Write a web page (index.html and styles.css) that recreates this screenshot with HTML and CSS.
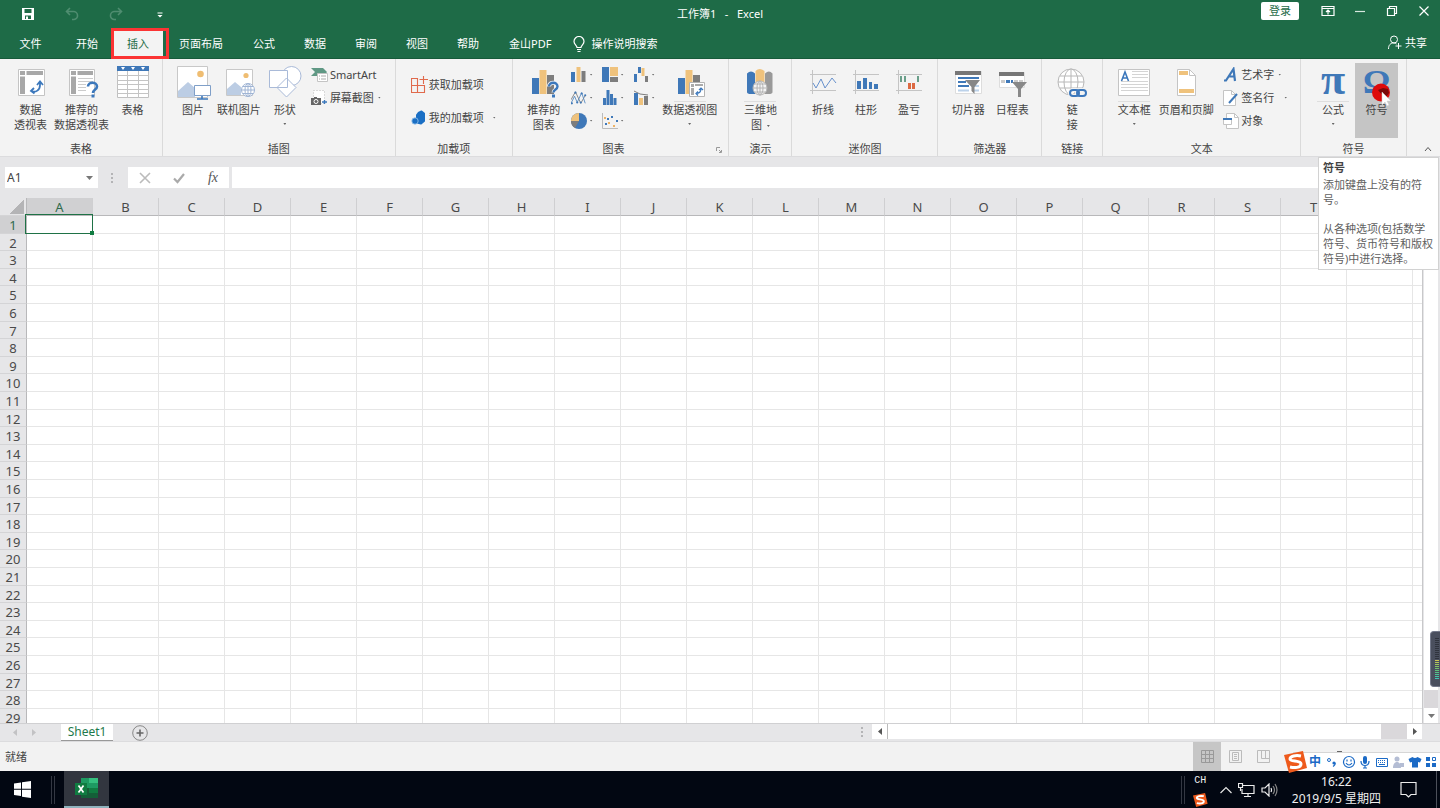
FILE: index.html
```html
<!DOCTYPE html>
<html lang="zh-CN">
<head>
<meta charset="utf-8">
<title>工作簿1 - Excel</title>
<link rel="stylesheet" href="styles.css">
</head>
<body>
<header class="titlebar">
  <div class="quick">
    <button aria-label="保存"><svg width="14" height="14" viewBox="0 0 14 14"><path d="M1 1h12v12H1z" fill="#fff"/><path d="M3.500 2h7v4h-7zM4 8.500h6V12H4z" fill="#1e6b47"/><path d="M5 9.500h2V12H5z" fill="#fff"/></svg></button>
    <button aria-label="撤消"><svg width="14" height="14" viewBox="0 0 14 14" fill="none" stroke="#4f8d70" stroke-width="1.600"><path d="M5 1L1.500 4.500 5 8M2 4.500h6a4 4 0 0 1 1 8H7"/></svg></button>
    <button aria-label="恢复"><svg width="14" height="14" viewBox="0 0 14 14" fill="none" stroke="#4f8d70" stroke-width="1.600"><path d="M9 1l3.500 3.500L9 8M12 4.500H6a4 4 0 0 0-1 8h2"/></svg></button>
    <button aria-label="自定义快速访问工具栏"><svg width="14" height="14" viewBox="0 0 14 14"><path d="M4.500 5.500h5v1h-5zM4.500 8h5L7 10.500z" fill="#fff"/></svg></button>
  </div>
  <h1 class="doc-title">工作簿1&nbsp; &nbsp;-&nbsp; &nbsp;Excel</h1>
  <div class="window-tools">
    <button class="login">登录</button>
    <button aria-label="功能区显示选项"><svg width="14" height="12" viewBox="0 0 14 12"><path d="M1 1.500h12v9H1zM1 3.500h12M7 9.500V5M5 7l2-2 2 2" fill="none" stroke="#fff" stroke-width="1.200"/></svg></button>
    <button aria-label="最小化"><svg width="14" height="12" viewBox="0 0 14 12"><path d="M2 6.500h10" stroke="#d8e8df" stroke-width="1.200"/></svg></button>
    <button aria-label="还原"><svg width="14" height="12" viewBox="0 0 14 12"><path d="M2.500 3.500h7v7h-7zM4.500 3V1.500h7v7H10" fill="none" stroke="#fff" stroke-width="1.200"/></svg></button>
    <button aria-label="关闭"><svg width="14" height="12" viewBox="0 0 14 12"><path d="M2.500 1.500l9 9M11.500 1.500l-9 9" stroke="#fff" stroke-width="1.200"/></svg></button>
  </div>
</header>

<nav class="tabs">
  <button class="tab tab-file">文件</button>
  <button class="tab">开始</button>
  <button class="tab tab-active">插入</button>
  <button class="tab tab-wide">页面布局</button>
  <button class="tab">公式</button>
  <button class="tab">数据</button>
  <button class="tab">审阅</button>
  <button class="tab">视图</button>
  <button class="tab">帮助</button>
  <button class="tab tab-wide">金山PDF</button>
  <button class="tell-me"><svg width="12" height="17" viewBox="0 0 12 17" fill="none" stroke="#fff" stroke-width="1.200"><path d="M4 11.500c0-2-3-3-3-6a5 5 0 0 1 10 0c0 3-3 4-3 6zM4 13.500h4M4.500 15.500h3"/></svg>操作说明搜索</button>
  <button class="share"><svg width="14" height="15" viewBox="0 0 14 15" fill="none" stroke="#fff"><circle cx="6" cy="4.500" r="3.500"/><path d="M.5 14c0-4 2-6 5-6 1.500 0 2.500.5 3 1M10.500 8v6M7.500 11h6"/></svg>共享</button>
</nav>

<main class="ribbon">
  <section class="group">
    <div class="items pad-5">
      <button class="big w-51"><svg class="ico" viewBox="0 0 32 32"><path d="M3.500 3.500h26v26h-26z" fill="#fff" stroke="#c4c4c4"/><path d="M5 5h5v4H5zM11.500 5H28v4H11.500zM5 10.500h5V28H5z" fill="#a8a8a8"/><path d="M16 25c5 2 9-1 9-6v-2M22 19l3-3.500 3 3.500M19 22l-3 3 3.500 2.500" fill="none" stroke="#3c78bc" stroke-width="1.800"/></svg><span>数据<br>透视表</span></button>
      <button class="big w-51"><svg class="ico" viewBox="0 0 32 32"><path d="M3.500 3.500h25v26h-25z" fill="#fff" stroke="#c4c4c4"/><path d="M5 5h5v4H5zM11.500 5H27v4H11.500zM5 10.500h5V28H5z" fill="#a8a8a8"/><path d="M12 12.500h15M12 15.500h15M12 18.500h8M12 21.500h8M12 24.500h8" stroke="#ccc"/><path d="M22 20.500c0-5 9-5 9 0 0 3-4 3-4 6.500" fill="none" stroke="#3c78bc" stroke-width="2.600"/><path d="M25.500 28.500h3v3h-3z" fill="#3c78bc"/></svg><span>推荐的<br>数据透视表</span></button>
      <button class="big w-51"><svg class="ico" viewBox="0 0 32 32"><path d="M.5 4.500h31v27H.5z" fill="#fff" stroke="#c0c0c0"/><path d="M0 0h32v5H0z" fill="#3f78b8"/><path d="M4 1h4L6 4zM14 1h4l-2 3zM24 1h4l-2 3z" fill="#fff"/><path d="M0 9.500h32M0 14.500h32M0 18.500h32M0 23.500h32M0 27.500h32M10.500 5v27M21.500 5v27" stroke="#c4c4c4"/></svg><span>表格</span></button>
    </div>
    <h2 class="caption">表格</h2>
  </section>

  <section class="group">
    <div class="items pad-7">
      <button class="big w-46"><svg class="ico wide" viewBox="0 0 36 34"><path d="M2.500 .5h30v31h-30z" fill="#fff" stroke="#c8c8c8"/><circle cx="25.500" cy="8" r="3.300" fill="#efbd72"/><path d="M3 29V25l10-9 7 6v9H3z" fill="#bccde4"/><path d="M19.500 19.500h16v10h-16z" fill="#fff" stroke="#7f9fc8"/><path d="M27 30v3M22 33h11" stroke="#3c78bc" stroke-width="1.600"/></svg><span>图片</span></button>
      <button class="big w-46"><svg class="ico" viewBox="0 0 32 32"><path d="M3.500 3.500h26v26h-26z" fill="#fff" stroke="#c8c8c8"/><circle cx="23" cy="9.500" r="2.600" fill="#efbd72"/><path d="M4 29V23l8-7 6 5v8z" fill="#bccde4"/><g fill="#fff" stroke="#9fb4d4"><circle cx="25" cy="24" r="6.500"/><ellipse cx="25" cy="24" rx="3" ry="6.500"/><path d="M18.500 24h13M25 17.500v13M20 20.500h10M20 27.500h10"/></g></svg><span>联机图片</span></button>
      <button class="big w-46"><svg class="ico" viewBox="0 0 32 32" fill="#fff" stroke="#a9bad8"><circle cx="22.500" cy="10" r="9.500"/><path d="M.5 4.500h18v17H.5zM17.500 12l9.500 9.500L17.500 31 8 21.500z"/></svg><span>形状</span><i class="caret"></i></button>
      <div class="stack">
        <button class="small"><svg width="17" height="16" viewBox="0 0 17 16"><path d="M0 1h12l4 4-3 4H0l4-4z" fill="#5f9884"/><path d="M6.500 6.500h10v8h-10z" fill="#fff" stroke="#c4c4c4"/><path d="M8 9h1M10 9h5M8 12h1M10 12h5" stroke="#aaa"/></svg><span>SmartArt</span></button>
        <button class="small"><svg width="17" height="16" viewBox="0 0 17 16"><path d="M2.500 .5h11v13h-11z" fill="#fff" stroke="#bbb" stroke-dasharray="1 2"/><path d="M0 8h3V7h3v1h4v7H0z" fill="#666"/><circle cx="5" cy="11.500" r="2" fill="none" stroke="#fff"/><path d="M11 12h5M13.500 10v4" stroke="#3c78bc" stroke-width="1.400"/></svg>屏幕截图<i class="caret"></i></button>
      </div>
    </div>
    <h2 class="caption">插图</h2>
  </section>

  <section class="group">
    <div class="items addins">
      <button class="small"><svg width="17" height="18" viewBox="0 0 17 18" fill="none" stroke="#e06a4c" stroke-width="1.100"><path d="M.5 2.500h6v7h-6zM.5 9.500h6v7h-6zM6.500 9.500h7v7h-7zM12.500 0v8M8.500 3.500H17"/></svg>获取加载项</button>
      <button class="small"><svg width="17" height="18" viewBox="0 0 17 18"><path d="M7.500 4l3-1.500 2.500 2v7.500l-3 2.500-4-1V6z" fill="#1b6fc4" stroke="#1b6fc4" stroke-width="2" stroke-linejoin="round"/><circle cx="4" cy="12" r="3.200" fill="#1b6fc4" stroke="#9cc6ee" stroke-width=".8"/></svg>我的加载项<i class="caret far"></i></button>
    </div>
    <h2 class="caption">加载项</h2>
  </section>

  <section class="group">
    <div class="items charts">
      <button class="big w-50"><svg class="ico" viewBox="0 0 32 32"><path d="M4 12h7v16H4z" fill="#3f78b8"/><path d="M11.500 4h7v24h-7z" fill="#efc27c"/><path d="M19 9h7v19h-7z" fill="#7d7d7d"/><path d="M21 20.500c0-5 8.500-5 8.500 0 0 3-4 3-4 6" fill="none" stroke="#f3f3f3" stroke-width="4"/><path d="M21 20.500c0-5 8.500-5 8.500 0 0 3-4 3-4 6" fill="none" stroke="#3c78bc" stroke-width="2.400"/><path d="M24 28.500h3v3h-3z" fill="#3c78bc"/></svg><span>推荐的<br>图表</span></button>
      <div class="mini-grid">
        <button aria-label="柱形图"><svg width="16" height="16" viewBox="0 0 16 16"><path d="M0 5h4v10H0z" fill="#3f78b8"/><path d="M5.500 0h4v15h-4z" fill="#efc27c"/><path d="M10.500 4h4v11h-4z" fill="#7d7d7d"/></svg><i class="caret"></i></button>
        <button aria-label="层次结构图"><svg width="16" height="16" viewBox="0 0 16 16"><path d="M0 0h7v15H0z" fill="#3f78b8"/><path d="M8 0h8v9H8z" fill="#efc27c"/><path d="M8 10h8v5H8z" fill="#7d7d7d"/></svg><i class="caret"></i></button>
        <button aria-label="瀑布图"><svg width="16" height="16" viewBox="0 0 16 16"><path d="M1 7h3v8H1zM5 0h3v6H5z" fill="#3f78b8"/><path d="M8.500 1h3v8h-3z" fill="#efc27c"/><path d="M12 9h3v6h-3z" fill="#7d7d7d"/></svg><i class="caret"></i></button>
        <button aria-label="折线图"><svg width="16" height="16" viewBox="0 0 18 16" fill="none"><path d="M0 10l5-9 6 13 5-9" stroke="#7d7d7d"/><path d="M0 14l4-8 3 7 5-11 4 12" stroke="#5588c0"/><g fill="#3f78b8"><circle cx="1" cy="14" r="1.200"/><circle cx="7" cy="13" r="1.200"/><circle cx="12" cy="3" r="1.200"/><circle cx="16" cy="5" r="1.200"/><circle cx="5" cy="2" r="1.200"/><circle cx="11" cy="13" r="1.200"/></g></svg><i class="caret"></i></button>
        <button aria-label="统计图"><svg width="16" height="16" viewBox="0 0 16 16"><path d="M1 8h3v7H1zM4.500 0h3v15h-3zM8 4h3v11H8zM11.500 8h3v7h-3z" fill="#3f78b8"/></svg><i class="caret"></i></button>
        <button aria-label="组合图"><svg width="16" height="16" viewBox="0 0 16 16"><path d="M1 3h4v12H1z" fill="#3f78b8"/><path d="M6 8h4v7H6z" fill="#efc27c"/><path d="M11 6h4v9h-4z" fill="#7d7d7d"/><path d="M1 1l6 3 8 1" fill="none" stroke="#7d7d7d"/></svg><i class="caret"></i></button>
        <button aria-label="饼图"><svg width="16" height="16" viewBox="0 0 16 16"><circle cx="8" cy="8" r="8" fill="#3f78b8"/><path d="M8 8V0a8 8 0 0 0-8 8z" fill="#efc27c"/><path d="M8 8H0a8 8 0 0 0 4 7z" fill="#7d7d7d"/></svg><i class="caret"></i></button>
        <button aria-label="散点图"><svg width="16" height="16" viewBox="0 0 16 16"><path d="M.5 0v15.500H16" fill="none" stroke="#bbb"/><path d="M5 5h2v2H5zM9 3h2v2H9zM3 10h2v2H3zM14 7h2v2h-2z" fill="#3f78b8"/><path d="M2 4h2v2H2zM6 9h2v2H6zM11 12h2v2h-2z" fill="#efb366"/></svg><i class="caret"></i></button>
      </div>
      <button class="big w-62"><svg class="ico ruled" viewBox="0 0 32 32"><path d="M4 12h7v16H4z" fill="#3f78b8"/><path d="M11.500 4h7v24h-7z" fill="#efc27c"/><path d="M19 9h7v19h-7z" fill="#7d7d7d"/><path d="M15.500 16.500h15v14h-15z" fill="#fff" stroke="#b4b4b4"/><path d="M17 18h3v3h-3zM21 18h8v2h-8zM17 22h3v7h-3z" fill="#aaa"/><path d="M22 27.500c3 0 5-2 5-5M25 24l2-2 2 2M24 25.500l-2 2 2 2" fill="none" stroke="#3c78bc" stroke-width="1.200"/></svg><span>数据透视图</span><i class="caret"></i></button>
      <button class="launcher" aria-label="查看所有图表"><svg width="6" height="6" viewBox="0 0 6 6"><path d="M.5 4V.5H4M3 3l2 2M5.500 3v2.500H3" fill="none" stroke="#999"/></svg></button>
    </div>
    <h2 class="caption caption-charts">图表</h2>
  </section>

  <section class="group">
    <div class="items middle">
      <button class="big w-50"><svg class="ico ruled" viewBox="0 0 32 32"><path d="M3 7.500q4-4 8 0V28H7q-4 0-4-2z" fill="#3f78b8"/><path d="M11.500 5q4-4 9 0v23h-9z" fill="#efc27c"/><path d="M21 7.500q4-4 7.500 0V26q0 2-4 2H21z" fill="#999"/><g fill="#f3f3f3" stroke="#b4b4b4"><circle cx="16" cy="22" r="7"/><ellipse cx="16" cy="22" rx="3" ry="7"/><path d="M9 22h14M16 15v14M10.500 18h11M10.500 26h11"/></g></svg><span>三维地<br>图 <i class="caret inline"></i></span></button>
    </div>
    <h2 class="caption">演示</h2>
  </section>

  <section class="group">
    <div class="items pad-9">
      <button class="big w-43"><svg class="ico" viewBox="0 0 32 32" fill="none"><path d="M5.500 4v24M3 8.500h26M3 24.500h26" stroke="#c4c4c4"/><path d="M6 17l3 5 5-9 4 9 7-10 4 5" stroke="#6690cc"/></svg><span>折线</span></button>
      <button class="big w-43"><svg class="ico" viewBox="0 0 32 32" fill="none"><path d="M5.500 4v24M3 8.500h26M3 24.500h26" stroke="#c4c4c4"/><path d="M7 15h4v8H7zM13 12h4v11h-4zM19 16h3v7h-3zM24 18h4v5h-4z" fill="#3f78b8"/></svg><span>柱形</span></button>
      <button class="big w-43"><svg class="ico" viewBox="0 0 32 32" fill="none"><path d="M5.500 4v24M3 8.500h26M3 24.500h26" stroke="#c4c4c4"/><path d="M7 10h2v6H7zM11 10h2v6h-2zM24 10h2v6h-2z" fill="#6a9f8a"/><path d="M15 17h3v6h-3zM19 17h3v6h-3z" fill="#dc6a42"/></svg><span>盈亏</span></button>
    </div>
    <h2 class="caption">迷你图</h2>
  </section>

  <section class="group">
    <div class="items pad-8">
      <button class="big w-44"><svg class="ico" viewBox="0 0 32 32"><path d="M3.500 5.500h26v22h-26z" fill="#fff" stroke="#ddd"/><path d="M3 5h26v4H3z" fill="#777"/><path d="M6 12h21M6 16h8M6 20h11" stroke="#3f78b8" stroke-width="2"/><path d="M6 24.500h11M21 20h6M21 24.500h6" stroke="#bcd2ea" stroke-width="2"/><path d="M13 14h15l-5.500 7v7l-3-3v-4z" fill="#888"/></svg><span>切片器</span></button>
      <button class="big w-44"><svg class="ico" viewBox="0 0 32 32"><path d="M3.500 6.500h25v15h-25z" fill="#fff" stroke="#ddd"/><path d="M3 6h25v4H3z" fill="#777"/><path d="M5 14h4v3H5zM18 14h4v3h-4zM23 14h4v3h-4z" fill="#ccc"/><path d="M10 14h4v3h-4zM15 14h2v3h-2z" fill="#3f78b8"/><path d="M16 16h15l-6 7v8h-3v-8z" fill="#888"/></svg><span>日程表</span></button>
    </div>
    <h2 class="caption">筛选器</h2>
  </section>

  <section class="group">
    <div class="items middle">
      <button class="big w-50"><svg class="ico" viewBox="0 0 32 32" fill="none"><g fill="#fff" stroke="#b8b8b8"><circle cx="15" cy="16" r="13"/><ellipse cx="15" cy="16" rx="7" ry="13"/><path d="M2 16h26M15 3v26M4 10h22M4 22h22" fill="none"/></g><g stroke="#f3f3f3" stroke-width="4"><rect x="14" y="24" width="9" height="6" rx="3"/><rect x="21" y="24" width="9" height="6" rx="3"/></g><g stroke="#3c78bc" stroke-width="2"><rect x="14" y="24" width="9" height="6" rx="3"/><rect x="21" y="24" width="9" height="6" rx="3"/></g></svg><span>链<br>接</span></button>
    </div>
    <h2 class="caption">链接</h2>
  </section>

  <section class="group">
    <div class="items pad-6">
      <button class="big w-50"><svg class="ico ruled" viewBox="0 0 32 32"><path d="M.5 3.500h31v26H.5z" fill="#fff" stroke="#c4c4c4"/><path d="M14 5.500h16M14 8.500h16M14 11.500h16M3 15.500h27M3 18.500h27M3 21.500h27M3 24.500h27" stroke="#d4d4d4"/><path d="M3.500 15L7 6l3.500 9M4.500 12h5" fill="none" stroke="#3c78bc" stroke-width="1.600"/></svg><span>文本框</span><i class="caret"></i></button>
      <button class="big w-54"><svg class="ico" viewBox="0 0 32 32"><path d="M7.500 3.500h12l6 6v20h-18z" fill="#fff" stroke="#c4c4c4"/><path d="M19.500 3.500v6h6" fill="none" stroke="#c4c4c4"/><path d="M9 5h9v4H9zM9 23h15v4H9z" fill="#efc27c"/></svg><span>页眉和页脚</span></button>
      <div class="stack stack-text">
        <button class="small"><svg width="16" height="16" viewBox="0 0 16 16"><path d="M1 13.500h2L10.500 2 12 14M5 9.500h6.500" fill="none" stroke="#3f78b8" stroke-width="2.200"/></svg>艺术字<i class="caret"></i></button>
        <button class="small"><svg width="16" height="16" viewBox="0 0 16 16"><path d="M.5 .5h8l4 4v11H.5z" fill="#fff" stroke="#c4c4c4"/><path d="M8.500 .5v4h4" fill="none" stroke="#c4c4c4"/><path d="M6 13l8-9" stroke="#3f78b8" stroke-width="2"/></svg>签名行<i class="caret far"></i></button>
        <button class="small"><svg width="16" height="16" viewBox="0 0 16 16"><path d="M3.500 .5h8l4 4v11h-12z" fill="#fff" stroke="#c4c4c4"/><path d="M11.500 .5v4h4" fill="none" stroke="#c4c4c4"/><path d="M.5 5.500h8v6h-8z" fill="#fff" stroke="#c4c4c4"/><path d="M0 5h9v2H0z" fill="#3f78b8"/></svg>对象</button>
      </div>
    </div>
    <h2 class="caption">文本</h2>
  </section>

  <section class="group">
    <div class="items pad-10">
      <button class="big w-44"><b class="ico ruled glyph pi">π</b><span>公式</span><i class="caret"></i></button>
      <button class="big w-43 pressed"><b class="ico glyph omega">Ω</b><span>符号</span>
        <svg class="pointer" width="26" height="24" viewBox="0 0 26 24"><circle cx="10" cy="9.500" r="9" fill="#dd0b0b"/><path d="M9 9.500L7 7l5-2 5 1 1 4-3 4z" fill="#7c0a0a"/><path d="M11 9v13l3-3 2 4 2-1-2-4h4z" fill="#fff" stroke="#ccc" stroke-width=".5"/></svg>
      </button>
    </div>
    <h2 class="caption">符号</h2>
  </section>
  <div class="ribbon-end"><button aria-label="折叠功能区"><svg width="8" height="6" viewBox="0 0 8 6"><path d="M1 5l3-3.500L7 5" fill="none" stroke="#555"/></svg></button></div>
</main>

<div class="formula-bar">
  <div class="name-box"><input aria-label="名称框" value="A1"><button aria-label="名称列表"><svg width="7" height="4" viewBox="0 0 7 4"><path d="M0 0h7L3.500 4z" fill="#777"/></svg></button></div>
  <i class="dots"></i>
  <div class="fx-box">
    <button aria-label="取消"><svg width="12" height="12" viewBox="0 0 12 12"><path d="M1 1l10 10M11 1L1 11" stroke="#bbb" stroke-width="1.600"/></svg></button>
    <button aria-label="输入"><svg width="12" height="12" viewBox="0 0 12 12"><path d="M1 6.500L4.500 10 11 2" fill="none" stroke="#aaa" stroke-width="2.200"/></svg></button>
    <button class="fx" aria-label="插入函数">fx</button>
  </div>
  <input class="formula" aria-label="编辑栏">
</div>

<div class="sheet">
  <div class="grid-clip"><table class="cells" id="cells"></table></div>
  <div class="vscroll"><div class="vthumb"></div><div class="vtrack"></div><button aria-label="向下滚动"><svg width="7" height="4" viewBox="0 0 7 4"><path d="M0 0h7L3.500 4z" fill="#777"/></svg></button></div>
</div>

<div class="sheet-tabs">
  <div class="sheet-nav"><button aria-label="上一个"><svg width="5" height="8" viewBox="0 0 5 8"><path d="M4 0v7L0 3.500z" fill="#c2c2c4"/></svg></button><button aria-label="下一个"><svg width="5" height="8" viewBox="0 0 5 8"><path d="M1 0v7l4-3.500z" fill="#c2c2c4"/></svg></button></div>
  <button class="sheet-tab">Sheet1</button>
  <button class="add-sheet" aria-label="新工作表"><svg width="16" height="16" viewBox="0 0 16 16" fill="none" stroke="#888"><circle cx="8" cy="8" r="7.300"/><path d="M8 4.500v7M4.500 8h7" stroke="#666" stroke-width="1.600"/></svg></button>
  <i class="dots tabs-dots"></i>
  <div class="hscroll">
    <button aria-label="向左滚动"><svg width="4" height="7" viewBox="0 0 4 7"><path d="M4 0v7L0 3.500z" fill="#555"/></svg></button>
    <div class="hthumb"></div><div class="htrack"></div>
    <button aria-label="向右滚动"><svg width="4" height="7" viewBox="0 0 4 7"><path d="M0 0v7l4-3.500z" fill="#555"/></svg></button>
  </div>
</div>

<footer class="status">
  <span class="ready">就绪</span>
  <button class="view view-on" aria-label="普通"><svg width="13" height="13" viewBox="0 0 13 13"><path d="M.5 .5h12v12H.5zM.5 4.500h12M.5 8.500h12M4.500 .5v12M8.500 .5v12" fill="none" stroke="#999"/></svg></button>
  <button class="view" aria-label="页面布局"><svg width="13" height="13" viewBox="0 0 13 13"><path d="M.5 .5h12v12H.5zM3.500 2.500h6v8h-6zM5 4.500h3M5 6.500h3M5 8.500h3" fill="none" stroke="#bbb"/></svg></button>
  <button class="view" aria-label="分页预览"><svg width="13" height="13" viewBox="0 0 13 13"><path d="M.5 .5h12v12H.5zM4.500 .5v8h8M8.500 .5v8" fill="none" stroke="#bbb"/></svg></button>
  <input class="zoom" type="range" aria-label="缩放" value="50">
  <span class="percent">100%</span>
</footer>

<footer class="taskbar">
  <button class="start" aria-label="开始"><svg width="17" height="17" viewBox="0 0 17 17"><path d="M0 2.500L7 1.500v6.300H0zM8 1.300L17 0v7.800H8zM0 8.800h7v6.300L0 14zM8 8.800h9V17l-9-1.300z" fill="#fff"/></svg></button>
  <i class="bars"></i>
  <button class="app" aria-label="Excel"><svg width="23" height="21" viewBox="0 0 23 21"><path d="M6 0h17v20H6z" fill="#1e9a62"/><path d="M14 0h9v5h-9z" fill="#35c07f"/><path d="M6 10h8v10H6z" fill="#185c37"/><path d="M14 10h9v5h-9z" fill="#107c41"/><path d="M6 15h17v5H6z" fill="#145f38"/><path d="M0 5h12v12H0z" fill="#107c41"/><path d="M3.500 7.500l5 7M8.500 7.500l-5 7" stroke="#fff" stroke-width="1.700"/></svg></button>
  <div class="tray">
    <i class="bars"></i>
    <div class="lang"><span>CH</span><svg width="16" height="14" viewBox="0 0 24 22"><path d="M1 4l19-4 4 17-18 5z" fill="#ee5a1c"/><path d="M18 5c-5-1-11 0-11 3s11 1 11 5-7 4-11 3" fill="none" stroke="#fff" stroke-width="3"/></svg></div>
    <svg width="12" height="8" viewBox="0 0 12 8"><path d="M.5 7L6 1.500 11.500 7" fill="none" stroke="#e4e4e4" stroke-width="1.200"/></svg>
    <svg width="17" height="14" viewBox="0 0 17 14" fill="none" stroke="#ececec" stroke-width="1.200"><path d="M5 2.500h11v8H4V6M10 10.500v3M6 13.500h7"/><path d="M.5 .5h4v4h-4zM2.500 5v3"/></svg>
    <svg width="17" height="14" viewBox="0 0 17 14" fill="none" stroke="#ececec" stroke-width="1.200"><path d="M1 5h3l4-4v12L4 9H1zM10 5q1 2 0 4"/><path d="M12 3q3 4 0 8M14 1q4 6 0 12" stroke="#888"/></svg>
    <div class="clock"><span>16:22</span><span>2019/9/5 星期四</span></div>
    <svg width="17" height="17" viewBox="0 0 17 17"><path d="M1 1.500h15v12h-5L8.500 16 6 13.500H1z" fill="none" stroke="#ececec" stroke-width="1.200"/></svg>
    <i class="edge"></i>
  </div>
</footer>

<div class="tooltip" role="tooltip"><strong>符号</strong><p>添加键盘上没有的符<br>号。</p><p>从各种选项(包括数学<br>符号、货币符号和版权<br>符号)中进行选择。</p></div>

<div class="ime">
  <svg class="ime-logo" width="24" height="22" viewBox="0 0 24 22"><path d="M1 4l19-4 4 17-18 5z" fill="#ee5a1c"/><path d="M18 5c-5-1-11 0-11 3s11 1 11 5-7 4-11 3" fill="none" stroke="#fff" stroke-width="3"/></svg>
  <b>中</b>
  <svg width="14" height="14" viewBox="0 0 14 14"><circle cx="4" cy="5" r="1.500" fill="none" stroke="#1b6ac6"/><circle cx="9" cy="8" r="1.600" fill="#1b6ac6"/><path d="M10 8q.5 2-2 3.500" fill="none" stroke="#1b6ac6" stroke-width="1.300"/></svg>
  <svg width="14" height="14" viewBox="0 0 14 14" fill="none" stroke="#1b6ac6" stroke-width="1.200"><circle cx="7" cy="7" r="5.500"/><path d="M4 8q3 4 6 0M5 4.500v2M9 4.500v2"/></svg>
  <svg width="14" height="14" viewBox="0 0 14 14"><rect x="5" y="1" width="4" height="8" rx="2" fill="#1b6ac6"/><path d="M3 6c0 6 8 6 8 0M7 10v3M5 13h4" fill="none" stroke="#1b6ac6" stroke-width="1.200"/></svg>
  <svg width="14" height="14" viewBox="0 0 14 14"><path d="M1.500 3.500h11v8h-11z" fill="#fff" stroke="#1b6ac6"/><path d="M3 5.500h8M3 7.500h8" stroke="#1b6ac6" stroke-dasharray="1 1"/><path d="M4 9.500h6" stroke="#1b6ac6"/></svg>
  <svg width="14" height="14" viewBox="0 0 14 14" fill="#b4bdd4"><circle cx="6" cy="4" r="2.500"/><path d="M2 13c0-8 8-8 8 0zM9 8h4v4H9z"/></svg>
  <svg width="14" height="14" viewBox="0 0 14 14"><path d="M4.500 2q2.500 2 5 0L13.500 4l-1.500 3.500-2-.5V12.500H4V7l-2 .5L.5 4z" fill="#1b6ac6"/></svg>
  <svg width="14" height="14" viewBox="0 0 14 14"><path d="M2 2h4v4H2zM2 8h4v4H2zM8 8h4v4H8z" fill="#1b6ac6"/><path d="M8.500 2.500h3v3h-3z" fill="none" stroke="#1b6ac6"/></svg>
</div>
<div class="meter" aria-hidden="true"><i></i></div>
<script src="grid.js"></script>
</body>
</html>
```

FILE: styles.css
```css
* { box-sizing: border-box; }
body {
  margin: 0;
  height: 100vh;
  display: flex;
  flex-direction: column;
  position: relative;
  overflow: hidden;
  font: 11px/14px "Noto Sans", "Noto Sans CJK SC", sans-serif;
  color: #444;
  background: #e6e6e8;
}
button, input {
  font: inherit;
  color: inherit;
  border: 0;
  padding: 0;
  margin: 0;
  background: none;
  border-radius: 0;
}
button { white-space: nowrap; }
svg { display: block; flex: none; }
h1, h2, p { margin: 0; font: inherit; }

.titlebar {
  flex: none;
  height: 28px;
  display: grid;
  grid-template-columns: 1fr auto 1fr;
  background: #1e6b47;
  color: #fff;
}
.quick { display: flex; align-items: center; gap: 30px; padding-left: 21px; }
.doc-title { line-height: 27px; }
.window-tools {
  display: flex;
  justify-content: flex-end;
  align-items: center;
  gap: 18px;
  padding: 0 9px 6px 0;
}
.login {
  width: 38px;
  height: 18px;
  margin-right: 4px;
  background: #fff;
  color: #1e6b47;
  border-radius: 2px;
}

.tabs {
  flex: none;
  height: 31px;
  display: flex;
  align-items: center;
  gap: 1px;
  padding-top: 2px;
  background: #1e6b47;
  border-bottom: 1px solid #175a3a;
  color: #fff;
}
.tab { height: 26px; padding: 0 14px; }
.tab-file { width: 61px; }
.tab-wide { padding: 0 15px; }
.tab-active { position: relative; background: #f3f3f3; color: #1e6b47; }
.tab-active::after {
  content: "";
  position: absolute;
  inset: -3px -6px -2px -2px;
  border: 3px solid #fb3434;
}
.tell-me { display: flex; align-items: center; gap: 6px; margin-left: 6px; }
.share { display: flex; align-items: center; gap: 3px; margin: 0 13px 3px auto; }

.ribbon {
  flex: none;
  height: 98px;
  display: grid;
  grid-template-columns: 163fr 233fr 117fr 217fr 63fr 146fr 104fr 61fr 198fr 106fr 33fr;
  background: #f3f3f3;
  border-bottom: 1px solid #dcdcde;
}
.group {
  min-width: 0;
  display: flex;
  flex-direction: column;
  border-right: 1px solid #dadada;
}
.items { flex: 1; min-height: 0; display: flex; padding-top: 4px; position: relative; }
.caption { text-align: center; line-height: 14px; }
.caption-charts { padding-right: 14px; }
.pad-5 { padding-left: 5px; }
.pad-6, .charts { padding-left: 6px; }
.pad-7 { padding-left: 7px; }
.pad-8 { padding-left: 8px; }
.pad-9 { padding-left: 9px; }
.pad-10 { padding-left: 10px; }
.middle { justify-content: center; }

.big {
  flex: none;
  height: 75px;
  display: flex;
  flex-direction: column;
  align-items: center;
  gap: 4px;
  padding-top: 3px;
  line-height: 15px;
  position: relative;
}
.big .caret { margin-top: 2px; }
.w-43 { width: 43px; }
.w-44 { width: 44px; }
.w-46 { width: 46px; }
.w-50 { width: 50px; }
.w-51 { width: 51px; }
.w-54 { width: 54px; }
.w-62 { width: 62px; }
.ico { width: 32px; height: 32px; overflow: visible; }
.ico.wide { width: 36px; height: 34px; margin-bottom: -2px; }
.ruled { box-shadow: 0 3px 0 #f3f3f3, 0 4px 0 #dedede; }
.glyph {
  color: #3f78b8;
  font-family: "Liberation Serif", serif;
  text-align: center;
}
.pi { font-size: 44px; line-height: 28px; }
.omega { font-size: 34px; line-height: 32px; }
.pressed { background: #c5c5c5; }
.pointer { position: absolute; left: 16px; top: 20px; }

.caret {
  display: block;
  flex: none;
  width: 3px;
  height: 2px;
  background: #666;
  clip-path: polygon(0 0, 100% 0, 50% 100%);
}
.big .caret.inline { display: inline-block; vertical-align: middle; margin: 0 0 0 2px; }
.small .caret { margin-left: 2px; }
.small .caret.far { margin-left: 8px; }

.stack { display: flex; flex-direction: column; padding-left: 3px; }
.stack-text { padding-left: 10px; }
.small { height: 23px; display: flex; align-items: center; gap: 2px; }
.addins { flex-direction: column; gap: 10px; padding: 14px 0 0 15px; }
.addins .small { gap: 1px; }
.mini-grid {
  display: grid;
  grid-template-columns: repeat(3, 31px);
  grid-auto-rows: 23px;
  padding-left: 2px;
}
.mini-grid button { display: flex; align-items: center; gap: 3px; }
.charts .w-62 { margin-left: -5px; }
.launcher { position: absolute; right: 6px; bottom: -11px; }
.ribbon-end { display: flex; justify-content: center; align-items: flex-end; padding: 0 0 4px 8px; }

.formula-bar { flex: none; height: 41px; display: flex; padding: 10px 2px 10px 5px; }
.name-box { width: 93px; display: flex; background: #fff; padding: 0 5px 0 2px; font-size: 12px; }
.name-box input { flex: 1; min-width: 0; }
.dots {
  width: 2px;
  height: 10px;
  margin: 6px 15px 0 13px;
  background: repeating-linear-gradient(#b4b4b6 0 2px, transparent 2px 4px);
}
.fx-box { width: 101px; display: flex; align-items: center; justify-content: space-between; padding: 0 11px; background: #fff; }
.fx { font: italic 14px/20px "Liberation Serif", serif; color: #555; }
.formula { flex: 1; min-width: 0; margin-left: 3px; background: #fff; }

.sheet { flex: 1; min-height: 0; display: flex; }
.grid-clip { flex: 1; min-width: 0; overflow: hidden; background: #fff; border-right: 1px solid #c8c8ca; }
.cells { table-layout: fixed; width: 1479px; border-collapse: separate; border-spacing: 0; font-size: 13px; line-height: 14px; }
.cells th, .cells td { padding: 0; font-weight: 400; border-right: 1px solid #e6e6e6; border-bottom: 1px solid #e6e6e6; }
.cells tr { height: 18px; }
.cells tbody tr:nth-child(5n+2), .cells tbody tr:nth-child(5n+4) { height: 17px; }
.cells th { width: 66px; overflow: hidden; background: #e6e6e8; color: #4a4a4a; }
.cells thead th { padding-top: 1px; border-right-color: #cfcfd1; border-bottom-color: #b8b8ba; }
.cells th:first-child { width: 27px; padding-top: 1px; border-right-color: #b8b8ba; border-bottom-color: #d4d4d6; }
.cells thead th:first-child { background: linear-gradient(135deg, transparent 50%, #b4b4b6 50%) right 2px bottom 1px / 14px 14px no-repeat #e6e6e8; }
.cells th.picked, .cells tbody th.picked { background: #d0d0d2; color: #2f6b4d; }
.cells td.cursor { position: relative; }
.cells td.cursor::before { content: ""; position: absolute; inset: -2px -1px -1px -2px; border: 1px solid #1f7246; }
.cells td.cursor::after { content: ""; position: absolute; right: -2px; bottom: -2px; width: 4px; height: 4px; background: #107c41; }

.vscroll { flex: none; width: 17px; display: flex; flex-direction: column; padding: 0 2px 0 1px; }
.vthumb { flex: 1; background: #fff; }
.vtrack { height: 18px; background: #dad8db; }
.vscroll button { height: 15px; display: flex; align-items: center; justify-content: center; background: #fff; }
.name-box button { display: flex; align-items: center; }

.sheet-tabs { flex: none; height: 18px; display: flex; border-top: 1px solid #d0d0d2; }
.sheet-nav { width: 61px; display: flex; align-items: center; gap: 13px; padding-left: 13px; }
.sheet-tab { width: 52px; background: #fff; color: #1e7a4c; font-size: 12px; line-height: 16px; border-bottom: 1px solid #999; }
.add-sheet { margin-left: 19px; }
.tabs-dots { margin: 3px 9px 0 auto; }
.hscroll { width: 550px; display: flex; margin-right: 18px; padding-bottom: 2px; }
.hscroll button { flex: none; width: 15px; display: flex; align-items: center; justify-content: center; background: #fff; }
.hthumb { flex: 1; background: #fff; border-left: 1px solid #bbb; }
.htrack { width: 26px; background: #dad8db; }

.status { flex: none; height: 30px; display: flex; align-items: center; background: #f2f2f2; border-top: 1px solid #dcdcde; padding-right: 4px; }
.ready { margin: 0 auto 0 5px; }
.view { width: 28px; height: 100%; display: flex; align-items: center; justify-content: center; }
.view-on { background: #c6c6c6; }
.zoom { appearance: none; width: 106px; height: 11px; margin: 0 12px 0 9px; }
.zoom::-webkit-slider-thumb { appearance: none; width: 5px; height: 11px; background: #666; }
.percent { width: 32px; font-size: 12px; }

.taskbar { flex: none; height: 37px; display: flex; align-items: center; background: #020712; color: #f0f0f0; }
.start { padding-left: 14px; width: 51px; }
.bars { width: 4px; height: 28px; border: solid #343843; border-width: 0 1px; }
.app { height: 37px; width: 45px; margin-left: 9px; background: #32363f; border-bottom: 2px solid #8fb3bd; display: flex; align-items: center; justify-content: center; }
.tray { margin-left: auto; display: flex; align-items: center; height: 37px; gap: 6px; }
.lang { width: 19px; height: 35px; display: flex; flex-direction: column; align-items: center; justify-content: space-between; font: 10px/18px "Liberation Mono", monospace; margin-right: 4px; }
.clock { display: flex; flex-direction: column; align-items: center; font-size: 12px; line-height: 17px; margin: 0 13px 0 8px; }
.edge { width: 1px; height: 37px; background: #4c505a; margin: 0 3px 0 13px; }

.tooltip { position: absolute; top: 157px; right: 1px; width: 121px; padding: 3px 4px; background: #fff; border: 1px solid #d2d2d2; line-height: 15px; color: #606060; }
.tooltip strong { display: block; line-height: 14px; margin-bottom: 2px; color: #444; }
.tooltip p + p { margin-top: 14px; }

.ime { position: absolute; right: 0; bottom: 37px; width: 147px; height: 19px; display: flex; align-items: center; justify-content: space-between; padding: 0 2px 0 16px; background: #fff; border-top: 1px solid #d6d6d6; color: #1b6ac6; }
.ime b { width: 14px; font-size: 12px; }
.ime-logo { position: absolute; left: -10px; bottom: -2px; }
.meter { position: absolute; right: 0; top: 631px; width: 10px; height: 56px; padding: 6px 1px 6px 4px; background: #4a4f5e; border: 1px solid #73788a; border-right: 0; border-radius: 4px 0 0 4px; }
.meter i { display: block; height: 100%; background: repeating-linear-gradient(transparent 0 1px, #4a4f5e 1px 2px), linear-gradient(#30343e 52%, #d6c850 52%, #62c070 75%, #35c8c0); }
```

FILE: grid.js
```js
const letters = 'ABCDEFGHIJKLMNOPQRSTUV'.split('');
const rowCount = 29;
const head = '<thead><tr><th></th>' + letters.map((letter, i) =>
  `<th${i === 0 ? ' class="picked"' : ''}>${letter}</th>`).join('') + '</tr></thead>';
let body = '';
for (let row = 1; row <= rowCount; row++) {
  body += `<tr><th${row === 1 ? ' class="picked"' : ''}>${row}</th>` + letters.map((_, i) =>
    `<td${row === 1 && i === 0 ? ' class="cursor"' : ''}></td>`).join('') + '</tr>';
}
document.getElementById('cells').innerHTML = head + '<tbody>' + body + '</tbody>';
```
